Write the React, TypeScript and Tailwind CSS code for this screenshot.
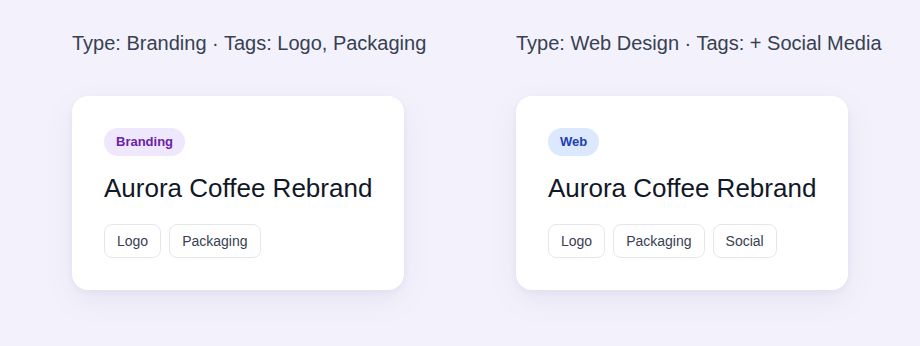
const projects = [
  {
    caption: "Type: Branding · Tags: Logo, Packaging",
    type: "Branding",
    badgeClass: "bg-[#efe7fc] text-[#6b21a8]",
    tags: ["Logo", "Packaging"],
  },
  {
    caption: "Type: Web Design · Tags: + Social Media",
    type: "Web",
    badgeClass: "bg-[#dbe8fd] text-[#1e40af]",
    tags: ["Logo", "Packaging", "Social"],
  },
];

function ProjectCard({ project }: { project: (typeof projects)[number] }) {
  return (
    <div className="w-[332px] rounded-2xl bg-white p-8 shadow-[0_10px_30px_rgba(60,50,120,0.08),0_2px_6px_rgba(60,50,120,0.04)]">
      <span className={`inline-flex h-7 items-center rounded-full px-3 text-[13px] font-bold ${project.badgeClass}`}>
        {project.type}
      </span>
      <h3 className="mt-4 whitespace-nowrap text-[26px] leading-8 text-[#111827]">Aurora Coffee Rebrand</h3>
      <div className="mt-5 flex gap-2">
        {project.tags.map((tag) => (
          <span
            key={tag}
            className="flex h-[34px] items-center rounded-lg border border-gray-200 px-3 text-[14px] text-[#374151]"
          >
            {tag}
          </span>
        ))}
      </div>
    </div>
  );
}

export default function App() {
  return (
    <div className="min-h-[346px] bg-[#f3f2fc] pl-[72px] pt-[29px] font-['Liberation_Sans',Arial,sans-serif]">
      <div className="flex gap-[112px]">
        {projects.map((project) => (
          <div key={project.type} className="flex w-[332px] flex-col">
            <p className="whitespace-nowrap text-[20px] leading-7 text-[#374151]">{project.caption}</p>
            <div className="mt-[39px]">
              <ProjectCard project={project} />
            </div>
          </div>
        ))}
      </div>
    </div>
  );
}
